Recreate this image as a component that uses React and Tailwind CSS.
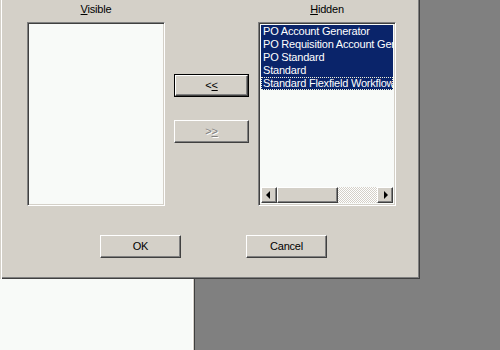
import React from 'react'

const hidden = [
  'PO Account Generator',
  'PO Requisition Account Generator',
  'PO Standard',
  'Standard',
  'Standard Flexfield Workflow',
]

const raised = 'bg-[#d4d0c8] border border-t-white border-l-white border-r-[#404040] border-b-[#404040] shadow-[inset_-1px_-1px_0_#808080]'
const sunken = 'bg-[#f8faf8] border border-t-[#808080] border-l-[#808080] border-r-white border-b-white shadow-[inset_1px_1px_0_#404040,inset_-1px_-1px_0_#d4d0c8]'

function Button({ children, isDefault, disabled, className = '' }) {
  const label = (
    <span className={disabled ? 'text-[#808080] [text-shadow:1px_1px_0_#fff]' : ''}>{children}</span>
  )
  if (isDefault) {
    return (
      <div className={`border border-black ${className}`}>
        <div className={`${raised} w-full h-full flex items-center justify-center`}>{label}</div>
      </div>
    )
  }
  return <div className={`${raised} flex items-center justify-center ${className}`}>{label}</div>
}

function ScrollBar() {
  return (
    <div className="flex h-[16px] shrink-0">
      <div className={`${raised} w-[16px] h-[16px] flex items-center justify-center`}>
        <div className="w-0 h-0 border-y-[4px] border-y-transparent border-r-[4px] border-r-black -ml-[1px]" />
      </div>
      <div className={`${raised} w-[62px] h-[16px]`} />
      <div className="w-[40px] h-[16px] bg-[repeating-conic-gradient(#d4d0c8_0_25%,#ffffff_0_50%)] bg-[length:2px_2px]" />
      <div className={`${raised} w-[16px] h-[16px] flex items-center justify-center`}>
        <div className="w-0 h-0 border-y-[4px] border-y-transparent border-l-[4px] border-l-black ml-[1px]" />
      </div>
    </div>
  )
}

export default function App() {
  return (
    <div className="w-[500px] h-[350px] bg-[#808080] overflow-hidden flex flex-col font-['Liberation_Sans',Arial,sans-serif] text-[11px] text-black tracking-[-0.2px]">
      <div className="w-[420px] h-[279px] shrink-0 bg-[#d4d0c8] flex flex-col shadow-[inset_1px_0_0_#d4d0c8,inset_2px_0_0_#fff,inset_-1px_-1px_0_#404040,inset_-2px_-2px_0_#808080]">
        <div className="flex h-[22px] leading-[13px] pt-[3px]">
          <div className="ml-[27px] w-[138px] text-center">
            <span className="underline">V</span>isible
          </div>
          <div className="w-[93px]" />
          <div className="w-[138px] text-center">
            <span className="underline">H</span>idden
          </div>
        </div>

        <div className="flex pl-[27px] h-[184px]">
          <div className={`${sunken} w-[138px] h-[184px]`} />

          <div className="w-[75px] mx-[9px] pt-[52px] flex flex-col gap-[23px]">
            <Button isDefault className="w-[75px] h-[23px]">
              &lt;<span className="underline">&lt;</span>
            </Button>
            <Button disabled className="w-[75px] h-[23px]">
              &gt;<span className="underline">&gt;</span>
            </Button>
          </div>

          <div className={`${sunken} w-[138px] h-[184px] p-[2px] flex flex-col`}>
            <div className="flex-1 overflow-hidden">
              {hidden.map((item, i) => (
                <div
                  key={item}
                  className={`h-[13px] leading-[13px] pl-[2px] whitespace-nowrap overflow-hidden bg-[#0a246a] text-white ${
                    i === hidden.length - 1 ? 'outline-1 outline-dotted outline-[#f0f0d8] -outline-offset-1' : ''
                  }`}
                >
                  {item}
                </div>
              ))}
            </div>
            <ScrollBar />
          </div>
        </div>

        <div className="flex mt-[29px] ml-[100px] gap-[65px]">
          <Button className="w-[81px] h-[23px]">OK</Button>
          <Button className="w-[81px] h-[23px]">Cancel</Button>
        </div>
      </div>

      <div className="w-[195px] flex-1 bg-[#f8faf8] shadow-[inset_-1px_0_0_#404040,inset_-2px_0_0_#d4d0c8,inset_-3px_0_0_#fff]" />
    </div>
  )
}
